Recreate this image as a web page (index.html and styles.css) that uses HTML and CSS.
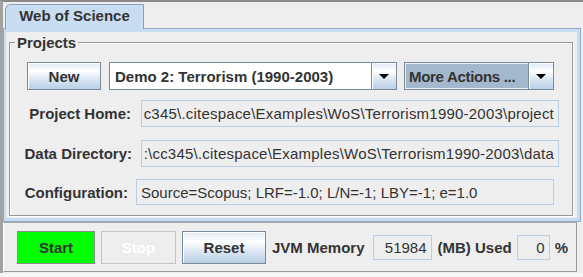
FILE: index.html
```html
<!DOCTYPE html>
<html>
<head>
<meta charset="utf-8">
<link rel="stylesheet" href="styles.css">
</head>
<body>
<div class="window">
  <div class="tabpane">
    <div class="tabstrip">
      <div class="tab-lead"></div>
      <div class="tab">Web of Science</div>
      <div class="tab-fill"></div>
    </div>
    <div class="tabcontent">
      <div class="panel">
        <div class="group">
          <div class="group-title">Projects</div>
          <div class="row row-actions">
            <div class="btn btn-new">New</div>
            <div class="combo combo-project">
              <span class="combo-text">Demo 2: Terrorism (1990-2003)</span>
              <span class="combo-arrow"><svg width="10" height="5" viewBox="0 0 10 5"><path d="M0 0H10L5 5Z" fill="#000"/></svg></span>
            </div>
            <div class="combo combo-more">
              <span class="combo-text">More Actions ...</span>
              <span class="combo-arrow"><svg width="10" height="5" viewBox="0 0 10 5"><path d="M0 0H10L5 5Z" fill="#000"/></svg></span>
            </div>
          </div>
          <div class="row row-field row-home">
            <span class="field-label">Project Home:</span>
            <div class="field field-wide"><span class="field-text path-text">c345\.citespace\Examples\WoS\Terrorism1990-2003\project</span></div>
          </div>
          <div class="row row-field row-data">
            <span class="field-label">Data Directory:</span>
            <div class="field field-wide"><span class="field-text path-text">:\cc345\.citespace\Examples\WoS\Terrorism1990-2003\data</span></div>
          </div>
          <div class="row row-field row-config">
            <span class="field-label">Configuration:</span>
            <div class="field field-wide field-left"><span class="field-text">Source=Scopus; LRF=-1.0; L/N=-1; LBY=-1; e=1.0</span></div>
          </div>
        </div>
      </div>
    </div>
  </div>
  <div class="statusbar">
    <div class="btn btn-start">Start</div>
    <div class="btn btn-stop">Stop</div>
    <div class="btn btn-reset">Reset</div>
    <span class="status-label label-jvm">JVM Memory</span>
    <div class="field field-mem"><span class="field-text">51984</span></div>
    <span class="status-label label-used">(MB) Used</span>
    <div class="field field-pct"><span class="field-text">0</span></div>
    <span class="status-label label-pct">%</span>
  </div>
</div>
</body>
</html>
```

FILE: styles.css
```css
* { box-sizing: border-box; }

html, body {
  margin: 0;
  padding: 0;
}

body {
  width: 583px;
  height: 277px;
  overflow: hidden;
  background: #f7f7f7;
  font-family: "Liberation Sans", Arial, sans-serif;
  font-size: 15px;
  color: #333333;
}

.window {
  width: 583px;
  height: 273px;
  background: #eeeeee;
  border-top: 2px solid #8a8a8a;
  border-left: 3px solid #a2a2a2;
}

.tabpane {
  margin-right: 2px;
}

.tabstrip {
  display: flex;
  align-items: flex-end;
  padding-top: 2px;
  height: 27px;
}

.tab-lead {
  width: 2px;
  height: 1px;
  background: #8fa8cc;
  align-self: flex-end;
}

.tab-fill {
  flex: 1;
  height: 1px;
  background: #8fa8cc;
  align-self: flex-end;
}

.tab {
  width: 139px;
  height: 25px;
  padding-top: 2px;
  line-height: 18px;
  text-align: center;
  font-weight: bold;
  background: #c8ddf2;
  border: 1px solid #8d9fb8;
  border-bottom: none;
  border-top-left-radius: 6px;
}

.tabcontent {
  background: #c8ddf2;
  border: 1px solid #8fa8cc;
  border-top: none;
  padding: 3px 3px 3px 2px;
  height: 193px;
}

.panel {
  background: #eeeeee;
  height: 186px;
  padding: 10px 4px 1px 3px;
}

.group {
  border: 1px solid #999999;
  box-shadow: inset 1px 1px 0 #ffffff, 1px 1px 0 #ffffff;
  height: 174px;
}

.group-title {
  width: fit-content;
  margin: -9px 0 0 5px;
  padding: 0 2px;
  line-height: 18px;
  background: #eeeeee;
  font-weight: bold;
}

.row {
  display: flex;
  align-items: center;
  justify-content: flex-end;
}

.row-actions {
  margin-top: 10px;
  height: 28px;
  padding-right: 18px;
}

.btn {
  display: flex;
  align-items: center;
  justify-content: center;
  font-weight: bold;
  border: 1px solid #7a8a99;
  box-shadow: inset 1px 1px 0 #ffffff;
  background: linear-gradient(to bottom, #dde8f3 0%, #ffffff 30%, #dde8f3 60%, #b8cfe5 100%);
}

.btn-new {
  width: 74px;
  height: 28px;
}

.combo {
  display: flex;
  height: 28px;
  border: 1px solid #7a8a99;
  font-weight: bold;
}

.combo-project {
  width: 288px;
  margin-left: 8px;
  background: #ffffff;
}

.combo-more {
  width: 150px;
  margin-left: 7px;
  background: #a3b8cc;
}

.combo-text {
  flex: 1;
  display: flex;
  align-items: center;
  white-space: nowrap;
  overflow: hidden;
}

.combo-project .combo-text { padding-left: 5px; }
.combo-more .combo-text {
  padding-left: 3px;
  letter-spacing: -0.3px;
  border: 1px solid #eeeeee;
  border-right: none;
}

.combo-arrow {
  width: 25px;
  display: flex;
  align-items: center;
  justify-content: center;
  border-left: 1px solid #7a8a99;
  box-shadow: inset 1px 1px 0 #ffffff;
  background: linear-gradient(to bottom, #dde8f3 0%, #ffffff 30%, #dde8f3 60%, #b8cfe5 100%);
}

.combo-arrow svg { display: block; }

.field-label {
  font-weight: bold;
  white-space: nowrap;
}

.field {
  display: flex;
  align-items: center;
  justify-content: flex-end;
  overflow: hidden;
  white-space: nowrap;
  background: #eeeeee;
  border: 1px solid #b8cfe5;
  padding: 0 4px;
}

.field-left { justify-content: flex-start; }

.field-text { flex: none; }

.path-text { letter-spacing: 0.22px; }

.field-wide {
  width: 418px;
  height: 27px;
}

.row-home {
  margin-top: 10px;
  padding-right: 13px;
  gap: 10px;
}

.row-data {
  margin-top: 13px;
  padding-right: 13px;
  gap: 9px;
}

.row-config {
  margin-top: 12px;
  padding-right: 18px;
  gap: 8px;
}

.row-config .field-wide { height: 26px; }

.statusbar {
  display: flex;
  align-items: center;
  height: 50px;
  margin-right: 6px;
  padding-left: 13px;
  border-top: 1px solid #a8a8a8;
  border-right: 1px solid #9a9a9a;
  border-bottom: 1px solid #9a9a9a;
  border-left: 1px solid #ffffff;
}

.btn-start {
  width: 78px;
  height: 33px;
  background: #00ff00;
  border: 1px solid #8a8a8a;
  box-shadow: none;
}

.btn-stop {
  width: 75px;
  height: 33px;
  margin-left: 6px;
  background: #eeeeee;
  border: 1px solid #c4c4c4;
  box-shadow: none;
  color: #ffffff;
}

.btn-reset {
  width: 84px;
  height: 33px;
  margin-left: 6px;
}

.status-label {
  font-weight: bold;
  white-space: nowrap;
}

.label-jvm { margin-left: 6px; }

.field-mem {
  width: 59px;
  height: 25px;
  margin-left: 8px;
}

.label-used { margin-left: 6px; }

.field-pct {
  width: 33px;
  height: 25px;
  margin-left: 5px;
}

.label-pct { margin-left: 5px; }
```
